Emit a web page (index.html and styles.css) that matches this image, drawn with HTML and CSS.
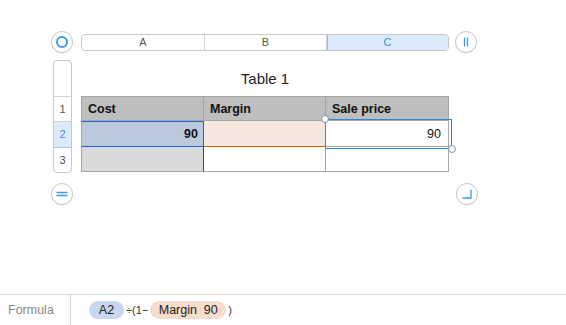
FILE: index.html
```html
<!DOCTYPE html>
<html>
<head>
<meta charset="utf-8">
<link rel="stylesheet" href="styles.css">
</head>
<body>
<div class="canvas">
  <div class="row-top">
    <div class="ctl"><svg width="14" height="14" viewBox="0 0 14 14"><circle cx="7" cy="7" r="5" fill="none" stroke="#3a9cf2" stroke-width="2"/></svg></div>
    <div class="colbar">
      <div class="colh">A</div>
      <div class="colh">B</div>
      <div class="colh sel">C</div>
    </div>
    <div class="ctl ctl-r"><svg width="14" height="14" viewBox="0 0 14 14"><path d="M5.5 2.5v9M8.5 2.5v9" stroke="#3a9cf2" stroke-width="1.3" fill="none"/></svg></div>
  </div>
  <div class="row-mid">
    <div class="rowbar">
      <div class="rowh blank"></div>
      <div class="rowh">1</div>
      <div class="rowh sel">2</div>
      <div class="rowh last">3</div>
    </div>
    <div class="tablearea">
      <div class="title">Table 1</div>
      <div class="grid">
        <div class="cell hd">Cost</div>
        <div class="cell hd">Margin</div>
        <div class="cell hd">Sale price</div>
        <div class="cell a2">90</div>
        <div class="cell b2"></div>
        <div class="cell c2">90</div>
        <div class="cell a3"></div>
        <div class="cell b3"></div>
        <div class="cell c3"></div>
        <div class="selbox"><span class="hdl tl"></span><span class="hdl br"></span></div>
      </div>
    </div>
  </div>
  <div class="row-bot">
    <div class="ctl"><svg width="14" height="14" viewBox="0 0 14 14"><path d="M1.5 5.5h11M1.5 8.5h11" stroke="#3a9cf2" stroke-width="1.3" fill="none"/></svg></div>
    <div class="ctl ctl-br"><svg width="14" height="14" viewBox="0 0 14 14"><path d="M11 2.5v8.5H2.5" stroke="#3a9cf2" stroke-width="1.3" fill="none"/></svg></div>
  </div>
</div>
<div class="formulabar">
  <div class="flabel">Formula</div>
  <div class="fbody">
    <span class="pill blue">A2</span>
    <span class="op">÷(1−</span>
    <span class="pill peach">Margin&nbsp; 90</span>
    <span class="op">)</span>
  </div>
</div>
</body>
</html>
```
FILE: styles.css
```css
* { box-sizing: border-box; }
html, body { margin: 0; padding: 0; background: #fff; }
body {
  width: 566px;
  height: 325px;
  overflow: hidden;
  font-family: "Liberation Sans", Arial, sans-serif;
  color: #222;
  position: relative;
}
.canvas {
  padding: 31px 0 0 51px;
  height: 294px;
}
.row-top {
  display: flex;
  align-items: center;
  height: 22px;
}
.ctl {
  width: 22px;
  height: 22px;
  border-radius: 50%;
  border: 1px solid #c9c9c9;
  background: #fff;
  box-shadow: 0 0.5px 1px rgba(0,0,0,0.08);
  display: flex;
  align-items: center;
  justify-content: center;
  flex: none;
}
.colbar {
  margin-left: 8px;
  width: 368px;
  height: 17px;
  display: flex;
  border: 1px solid #c8c8c8;
  border-radius: 4px;
  overflow: hidden;
}
.colh {
  flex: none;
  width: 123px;
  font-size: 11px;
  line-height: 15px;
  text-align: center;
  color: #555;
  border-right: 1px solid #d2d2d2;
}
.colh:nth-child(2) { width: 122px; }
.colh.sel {
  flex: 1;
  border-right: none;
  background: #dcebfc;
  color: #3b8fe2;
  box-shadow: inset 1px 0 0 #9fbddd;
}
.ctl-r { margin-left: 6px; }
.row-mid {
  display: flex;
  margin-top: 7px;
}
.rowbar {
  margin-left: 2px;
  width: 19px;
  height: 113px;
  border: 1px solid #c8c8c8;
  border-radius: 4px;
  overflow: hidden;
  display: flex;
  flex-direction: column;
}
.rowh {
  height: 25px;
  font-size: 11px;
  line-height: 24px;
  text-align: center;
  color: #555;
  border-bottom: 1px solid #d2d2d2;
}
.rowh.blank { height: 36px; }
.rowh.sel { height: 26px; background: #dcebfc; color: #3b8fe2; border-bottom-color: #a9c6e6; }
.rowh.last { border-bottom: none; flex: 1; }
.tablearea {
  margin-left: 9px;
  width: 368px;
}
.title {
  height: 36px;
  text-align: center;
  font-size: 15px;
  line-height: 37px;
  color: #222;
}
.grid {
  position: relative;
  display: grid;
  grid-template-columns: 123px 122px 123px;
  grid-template-rows: 25px 26px 25px;
}
.cell {
  font-size: 12.5px;
  border-right: 1px solid #a8a8a8;
  border-bottom: 1px solid #a8a8a8;
  padding: 0 6px;
  display: flex;
  align-items: center;
}
.cell:nth-child(3n+1) { border-left: 1px solid #a8a8a8; }
.hd {
  background: #bebebe;
  font-weight: bold;
  color: #111;
  border-top: 1px solid #a8a8a8;
  border-right-color: #a5a5a5;
}
.a2 {
  background: #bcc8dc;
  border: 1px solid #1f62e0;
  justify-content: flex-end;
  font-weight: bold;
  color: #111;
  padding-right: 5px;
}
.b2 {
  background: #f5e7dd;
  border-right: 1px solid #c4601c;
  border-bottom: 1px solid #c4601c;
}
.c2 {
  justify-content: flex-end;
  padding-right: 7px;
  color: #111;
}
.a3 {
  background: #dadada;
  border-right-color: #444;
}
.selbox {
  position: absolute;
  left: 244px;
  top: 23px;
  width: 127px;
  height: 30px;
  border: 1.5px solid #2f86d6;
  pointer-events: none;
}
.hdl {
  position: absolute;
  width: 8px;
  height: 8px;
  border-radius: 50%;
  background: #fff;
  border: 1.5px solid #7c93b4;
}
.hdl.tl { left: -5px; top: -5px; }
.hdl.br { right: -5px; bottom: -5px; }
.row-bot {
  display: flex;
  margin-top: 10px;
}
.ctl-br { margin-left: 383px; }
.formulabar {
  height: 31px;
  border-top: 1px solid #d6d6d6;
  display: flex;
  align-items: stretch;
}
.flabel {
  width: 71px;
  border-right: 1px solid #d6d6d6;
  font-size: 12.5px;
  color: #888;
  padding-left: 8px;
  display: flex;
  align-items: center;
}
.fbody {
  display: flex;
  align-items: center;
  padding-left: 18px;
  font-size: 12.5px;
  white-space: nowrap;
}
.pill {
  flex: none;
  height: 18px;
  border-radius: 9px;
  display: flex;
  align-items: center;
  justify-content: center;
  color: #222;
  white-space: nowrap;
}
.pill.blue { background: #c8d6ef; width: 35px; }
.pill.peach { background: #f6dccb; width: 76px; }
.op { flex: none; font-size: 11px; color: #333; padding: 0 2px; }
```
